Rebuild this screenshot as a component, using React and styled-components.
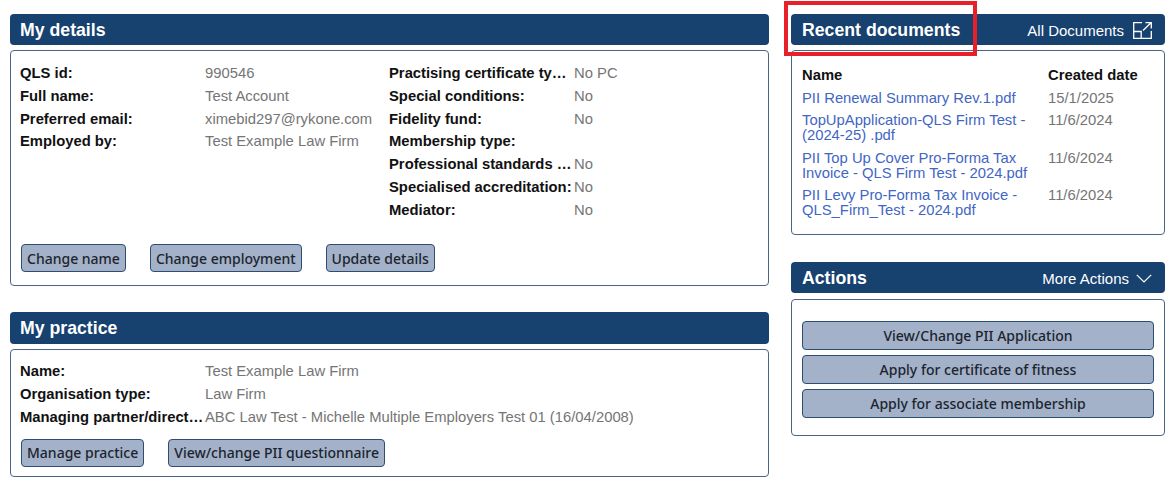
import React from 'react';
import styled, { createGlobalStyle } from 'styled-components';

const Global = createGlobalStyle`
  html, body { margin: 0; padding: 0; background: #fff; }
  body { font-family: "Liberation Sans", Arial, sans-serif; }
`;
const Page = styled.div`
  position: relative;
  width: 1169px;
  height: 483px;
  overflow: hidden;
  display: grid;
  grid-template-columns: 759px 374px;
  column-gap: 22px;
  padding: 14px 4px 0 10px;
  box-sizing: border-box;
  align-items: start;
`;
const Column = styled.div`
  display: flex;
  flex-direction: column;
  gap: ${p => p.$gap}px;
`;
const Section = styled.section`
  display: flex;
  flex-direction: column;
  gap: ${p => p.$gap || 5}px;
`;
const Header = styled.header`
  height: ${p => p.$h || 31}px;
  background: #17416f;
  border-radius: 4px;
  color: #fff;
  display: flex;
  align-items: center;
  justify-content: space-between;
  padding: ${p => p.$pad || '1px 13px 0 10px'};
  box-sizing: border-box;
`;
const Title = styled.h2`
  margin: 0;
  font-size: 17.7px;
  font-weight: 700;
  line-height: 30px;
`;
const HeaderLink = styled.a`
  display: flex;
  align-items: center;
  gap: ${p => p.$gap}px;
  color: #fff;
  font-size: 15px;
`;
const Card = styled.div`
  height: ${p => p.$h}px;
  box-sizing: border-box;
  border: 1px solid #4a6585;
  border-radius: 4px;
  padding: ${p => p.$pad || '11px 9px 0'};
  display: flex;
  flex-direction: column;
  background: #fff;
`;
const Details = styled.div`
  display: grid;
  grid-template-columns: 369px 1fr;
`;
const Row = styled.div`
  display: grid;
  grid-template-columns: 185px 1fr;
  height: 22.75px;
  line-height: 22.75px;
  font-size: 14.8px;
`;
const Label = styled.div`
  font-weight: 700;
  color: #111;
  white-space: nowrap;
  overflow: hidden;
  text-overflow: ellipsis;
  padding-right: 1px;
`;
const Value = styled.div`
  color: #757575;
  white-space: nowrap;
`;
const Buttons = styled.div`
  display: flex;
  gap: 24px;
  margin: ${p => p.$top}px 0 0 1px;
`;
const Button = styled.button`
  height: 28px;
  padding: 0 5px;
  border: 1px solid #2f4d70;
  border-radius: 4px;
  background: #a3b2c8;
  color: #1c2430;
  font-family: "Noto Sans", "Open Sans", sans-serif;
  font-size: 14px;
  font-weight: 500;
  white-space: nowrap;
  cursor: pointer;
`;
const WideButton = styled(Button)`
  width: 100%;
  height: 29px;
`;
const ActionStack = styled.div`
  display: flex;
  flex-direction: column;
  gap: 5px;
`;
const DocGrid = styled.div`
  display: grid;
  grid-template-columns: 246px 1fr;
  font-size: 14.8px;
`;
const DocHead = styled.div`
  font-weight: 700;
  color: #111;
  height: 24px;
  line-height: 24px;
`;
const DocLink = styled.a`
  color: #3f66c4;
  line-height: 15px;
  padding: 3.75px 8px 3.75px 0;
`;
const DocDate = styled.div`
  color: #757575;
  line-height: 15px;
  padding-top: 3.75px;
`;
const Highlight = styled.div`
  position: absolute;
  left: 784px;
  top: 1px;
  width: 193px;
  height: 55px;
  box-sizing: border-box;
  border: 4px solid #e8202a;
  pointer-events: none;
`;

const ExternalIcon = () => (
  <svg width="19" height="17" viewBox="0 0 19 17" fill="none" stroke="#fff" strokeWidth="1.3">
    <path d="M9 .7H.7v15.6h17.6V9" />
    <path d="M.7 9.5h7.5v6.8" />
    <path d="M10 8.5 18 .8M12.5.7h5.8v5.8" />
  </svg>
);
const ChevronIcon = () => (
  <svg width="16" height="9" viewBox="0 0 16 9" fill="none" stroke="#fff" strokeWidth="1.2">
    <path d="M.8.8 8 8l7.2-7.2" />
  </svg>
);

const left = [
  ['QLS id:', '990546'],
  ['Full name:', 'Test Account'],
  ['Preferred email:', 'ximebid297@rykone.com'],
  ['Employed by:', 'Test Example Law Firm'],
];
const right = [
  ['Practising certificate type:', 'No PC'],
  ['Special conditions:', 'No'],
  ['Fidelity fund:', 'No'],
  ['Membership type:', ''],
  ['Professional standards scheme:', 'No'],
  ['Specialised accreditation:', 'No'],
  ['Mediator:', 'No'],
];
const practice = [
  ['Name:', 'Test Example Law Firm'],
  ['Organisation type:', 'Law Firm'],
  ['Managing partner/director:', 'ABC Law Test - Michelle Multiple Employers Test 01 (16/04/2008)'],
];
const docs = [
  ['PII Renewal Summary Rev.1.pdf', '15/1/2025'],
  ['TopUpApplication-QLS Firm Test - (2024-25) .pdf', '11/6/2024'],
  ['PII Top Up Cover Pro-Forma Tax Invoice - QLS Firm Test - 2024.pdf', '11/6/2024'],
  ['PII Levy Pro-Forma Tax Invoice - QLS_Firm_Test - 2024.pdf', '11/6/2024'],
];
const Rows = ({ items }) => (
  <div>
    {items.map(([l, v]) => (
      <Row key={l}><Label>{l}</Label><Value>{v}</Value></Row>
    ))}
  </div>
);

export default function App() {
  return (
    <Page>
      <Global />
      <Column $gap={26}>
        <Section>
          <Header><Title>My details</Title></Header>
          <Card $h={236}>
            <Details>
              <Rows items={left} />
              <Rows items={right} />
            </Details>
            <Buttons $top={23}>
              <Button>Change name</Button>
              <Button>Change employment</Button>
              <Button>Update details</Button>
            </Buttons>
          </Card>
        </Section>
        <Section>
          <Header $h={32} $pad="0 13px 0 10px"><Title>My practice</Title></Header>
          <Card $h={128} $pad="10px 9px 0">
            <Rows items={practice} />
            <Buttons $top={10.5}>
              <Button>Manage practice</Button>
              <Button>View/change PII questionnaire</Button>
            </Buttons>
          </Card>
        </Section>
      </Column>
      <Column $gap={27}>
        <Section>
          <Header $pad="1px 13px 0 11px">
            <Title>Recent documents</Title>
            <HeaderLink $gap={9}>All Documents <ExternalIcon /></HeaderLink>
          </Header>
          <Card $h={185} $pad="12px 10px 0">
            <DocGrid>
              <DocHead>Name</DocHead>
              <DocHead>Created date</DocHead>
              {docs.map(([n, d]) => (
                <React.Fragment key={n}>
                  <DocLink>{n}</DocLink>
                  <DocDate>{d}</DocDate>
                </React.Fragment>
              ))}
            </DocGrid>
          </Card>
        </Section>
        <Section $gap={6}>
          <Header $pad="1px 13px 0 11px"><Title>Actions</Title>
            <HeaderLink $gap={7}>More Actions <ChevronIcon /></HeaderLink>
          </Header>
          <Card $h={137} $pad="21px 10px 0">
            <ActionStack>
              <WideButton>View/Change PII Application</WideButton>
              <WideButton>Apply for certificate of fitness</WideButton>
              <WideButton>Apply for associate membership</WideButton>
            </ActionStack>
          </Card>
        </Section>
      </Column>
      <Highlight />
    </Page>
  );
}
